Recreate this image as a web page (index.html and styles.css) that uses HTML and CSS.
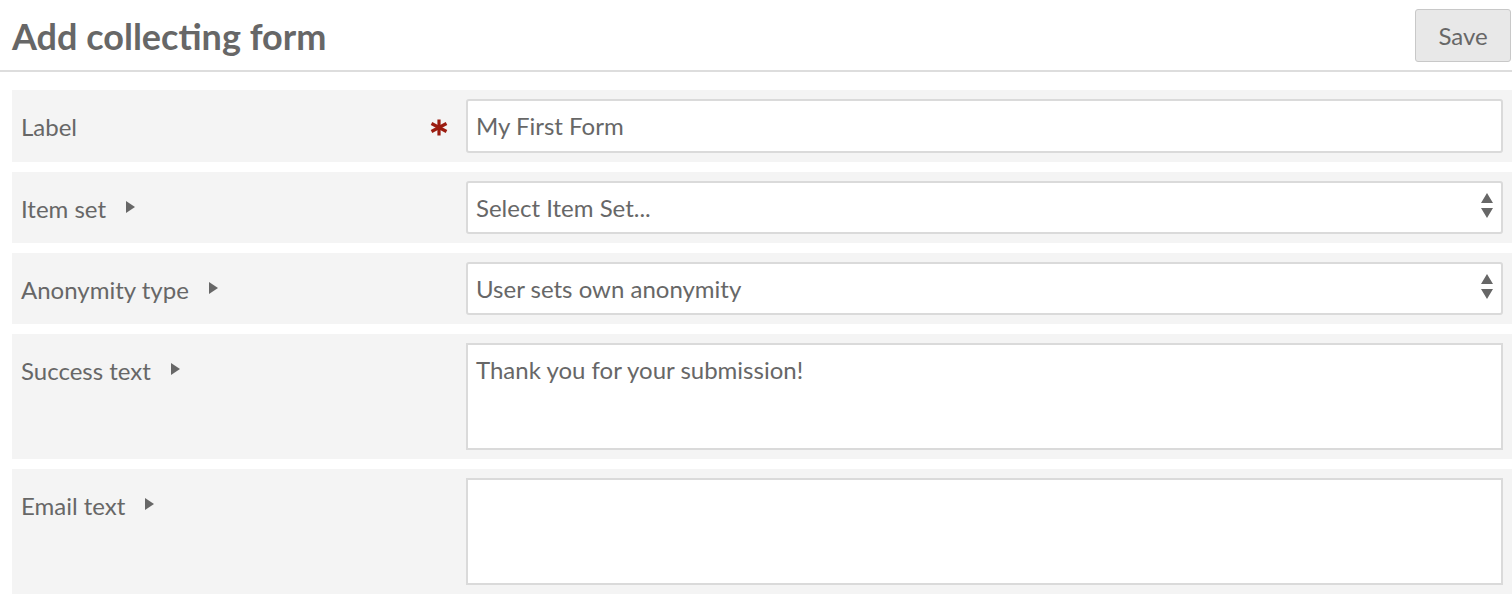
FILE: index.html
```html
<!DOCTYPE html>
<html>
<head>
<meta charset="utf-8">
<link rel="stylesheet" href="styles.css">
</head>
<body>
<header class="page-header">
  <h1 class="title">Add collecting form</h1>
  <button class="save-btn">Save</button>
</header>
<main class="form">
  <div class="row">
    <div class="field-label">
      <span class="label-text">Label</span>
      <svg class="required" width="18" height="17" viewBox="0 0 18 17" aria-label="required"><g stroke="#9b1c10" stroke-width="3.2" stroke-linecap="butt"><path d="M9 0.5 V16.5"/><path d="M1.5 4.5 L16.5 12.5"/><path d="M1.5 12.5 L16.5 4.5"/></g></svg>
    </div>
    <div class="field-input">
      <div class="input">My First Form</div>
    </div>
  </div>
  <div class="row">
    <div class="field-label">
      <span class="label-text">Item set</span>
      <svg class="caret" width="9" height="12" viewBox="0 0 9 12"><path d="M0 0 L9 6 L0 12 Z" fill="#676767"/></svg>
    </div>
    <div class="field-input">
      <div class="input select">Select Item Set...
        <svg class="updown" width="12" height="26" viewBox="0 0 12 26"><path d="M6 0 L12 10 L0 10 Z M0 15 L12 15 L6 25 Z" fill="#676767"/></svg>
      </div>
    </div>
  </div>
  <div class="row">
    <div class="field-label">
      <span class="label-text">Anonymity type</span>
      <svg class="caret" width="9" height="12" viewBox="0 0 9 12"><path d="M0 0 L9 6 L0 12 Z" fill="#676767"/></svg>
    </div>
    <div class="field-input">
      <div class="input select">User sets own anonymity
        <svg class="updown" width="12" height="26" viewBox="0 0 12 26"><path d="M6 0 L12 10 L0 10 Z M0 15 L12 15 L6 25 Z" fill="#676767"/></svg>
      </div>
    </div>
  </div>
  <div class="row">
    <div class="field-label">
      <span class="label-text">Success text</span>
      <svg class="caret" width="9" height="12" viewBox="0 0 9 12"><path d="M0 0 L9 6 L0 12 Z" fill="#676767"/></svg>
    </div>
    <div class="field-input">
      <div class="input textarea">Thank you for your submission!</div>
    </div>
  </div>
  <div class="row">
    <div class="field-label">
      <span class="label-text">Email text</span>
      <svg class="caret" width="9" height="12" viewBox="0 0 9 12"><path d="M0 0 L9 6 L0 12 Z" fill="#676767"/></svg>
    </div>
    <div class="field-input">
      <div class="input textarea"></div>
    </div>
  </div>
</main>
</body>
</html>
```
FILE: styles.css
```css
* { box-sizing: border-box; }
html, body { margin: 0; padding: 0; background: #fff; }
body {
  font-family: Lato, "Noto Sans", sans-serif;
  color: #676767;
}
.page-header {
  display: flex;
  justify-content: space-between;
  align-items: flex-start;
  height: 72px;
  padding: 0 1px 0 12px;
  border-bottom: 2px solid #dddddd;
}
.title {
  margin: 0;
  padding-top: 15px;
  font-size: 36px;
  font-weight: 700;
  line-height: 42px;
  color: #676767;
}
.save-btn {
  margin-top: 9px;
  width: 96px;
  height: 53px;
  background: #e8e8e8;
  border: 1px solid #c8c8c8;
  border-radius: 3px;
  font-family: Lato, sans-serif;
  font-size: 24px;
  color: #676767;
  padding: 0;
}
.form {
  display: flex;
  flex-direction: column;
  gap: 10px;
  padding: 18px 0 0 12px;
}
.row {
  display: flex;
  background: #f4f4f4;
  padding: 9px 9px 9px 9px;
}
.field-label {
  width: 445px;
  flex: none;
  display: flex;
  align-items: flex-start;
  padding-top: 14px;
  font-size: 24px;
  line-height: 28px;
}
.label-text { margin-right: 20px; }
.caret { margin-top: 6px; }
.required {
  margin-left: auto;
  margin-right: 18px;
  margin-top: 6px;
}
.field-input { flex: 1; }
.input {
  position: relative;
  background: #fff;
  border: 2px solid #dadada;
  border-radius: 3px;
  height: 54px;
  padding: 11px 8px;
  font-size: 24px;
  line-height: 28px;
  color: #676767;
}
.select { height: 53px; }
.updown {
  position: absolute;
  right: 8px;
  top: 10px;
}
.textarea {
  height: 107px;
  border-radius: 0;
}
```
